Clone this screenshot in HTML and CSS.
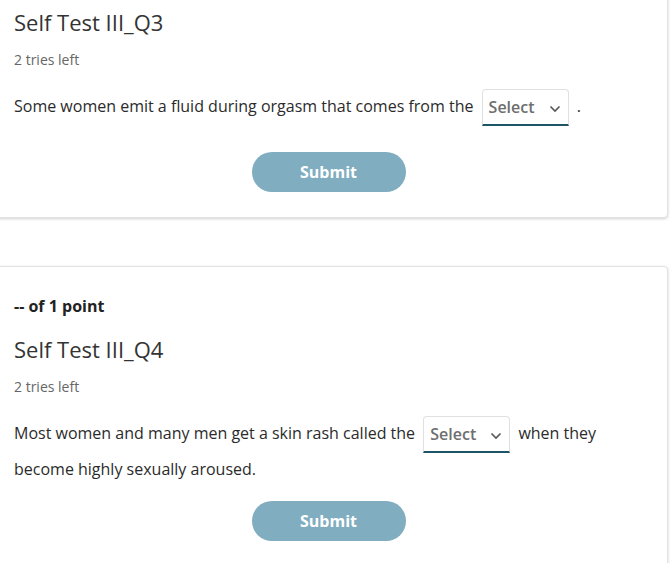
FILE: index.html
```html
<!DOCTYPE html>
<html lang="en">

<head>
    <meta charset="UTF-8">
    <meta name="viewport" content="width=device-width, initial-scale=1.0">
    <title>Self Test III</title>
    <link rel="stylesheet" href="styles.css">
</head>

<body>
    <main class="quiz">
        <!-- Q3 -->
        <section class="card card-first">
            <h2 class="q-title">Self Test III_Q3</h2>
            <p class="tries">2 tries left</p>
            <p class="question">
                Some women emit a fluid during orgasm that comes from the
                <span class="select">Select
                    <svg class="chev" width="12" height="8" viewBox="0 0 12 8"><path d="M1.5 1.5l4.5 4.5 4.5-4.5" fill="none" stroke="#555" stroke-width="1.6"/></svg>
                </span>
                .
            </p>
            <div class="actions">
                <button class="submit">Submit</button>
            </div>
        </section>

        <!-- Q4 -->
        <section class="card">
            <p class="points">-- of 1 point</p>
            <h2 class="q-title">Self Test III_Q4</h2>
            <p class="tries">2 tries left</p>
            <p class="question question-long">
                Most women and many men get a skin rash called the
                <span class="select">Select
                    <svg class="chev" width="12" height="8" viewBox="0 0 12 8"><path d="M1.5 1.5l4.5 4.5 4.5-4.5" fill="none" stroke="#555" stroke-width="1.6"/></svg>
                </span>
                when they become highly sexually aroused.
            </p>
            <div class="actions">
                <button class="submit">Submit</button>
            </div>
        </section>
    </main>
</body>

</html>
```

FILE: styles.css
```css
* {
    box-sizing: border-box;
}

body {
    margin: 0;
    padding: 0;
    background: #fff;
    font-family: "Open Sans", "Noto Sans", sans-serif;
    color: #2b2b2b;
    overflow: hidden;
}

.quiz {
    margin-left: -11px;
    width: 679px;
}

.card {
    background: #fff;
    border: 1px solid #e2e2e2;
    border-radius: 4px;
    box-shadow: 0 1px 3px rgba(0, 0, 0, 0.18);
    padding: 27px 24px 25px;
    margin-bottom: 48px;
}

.card-first {
    margin-top: -30px;
    padding-top: 36px;
}

.q-title {
    margin: 0;
    font-size: 22px;
    line-height: 30px;
    font-weight: 400;
    color: #333;
}

.tries {
    margin: 13px 0 0;
    font-size: 14px;
    line-height: 20px;
    color: #666;
}

.points {
    margin: 0 0 16px;
    font-size: 16px;
    line-height: 24px;
    font-weight: 700;
    color: #222;
}

.question {
    margin: 19px 0 26px;
    font-size: 16px;
    line-height: 32px;
    color: #2b2b2b;
}

.question-long {
    margin-bottom: 16px;
}

.select {
    display: inline-flex;
    align-items: center;
    justify-content: space-between;
    width: 87px;
    height: 37px;
    margin: 0 4px;
    padding: 0 7px 0 6px;
    border: 1px solid #e0e0e0;
    border-bottom: 2px solid #1c5566;
    border-radius: 4px 4px 0 0;
    color: #6e6e6e;
    font-weight: 600;
    vertical-align: middle;
    line-height: 1;
}

.chev {
    margin-top: 3px;
}

.actions {
    display: flex;
    justify-content: center;
}

.submit {
    width: 154px;
    height: 40px;
    border: none;
    border-radius: 20px;
    background: #80adc0;
    color: #fff;
    font-family: "Open Sans", "Noto Sans", sans-serif;
    font-size: 16px;
    font-weight: 700;
}
```
